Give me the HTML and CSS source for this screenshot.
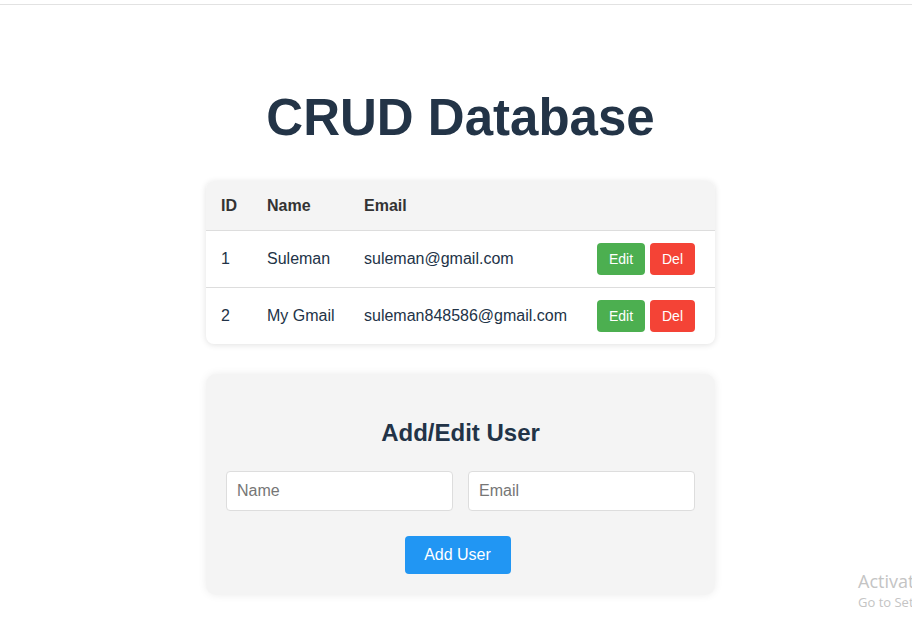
FILE: index.html
```html
<!DOCTYPE html>
<html lang="en">
<head>
<meta charset="utf-8">
<title>CRUD Database</title>
<link rel="stylesheet" href="styles.css">
</head>
<body>
<div class="topline"></div>
<main class="page">
  <h1 class="title">CRUD Database</h1>
  <div class="card table-card">
    <table class="users">
      <thead>
        <tr><th class="c-id">ID</th><th class="c-name">Name</th><th class="c-email">Email</th><th class="c-act"></th></tr>
      </thead>
      <tbody>
        <tr>
          <td>1</td><td>Suleman</td><td>suleman@gmail.com</td>
          <td class="c-act"><div class="actions"><button class="btn edit">Edit</button><button class="btn del">Del</button></div></td>
        </tr>
        <tr>
          <td>2</td><td>My Gmail</td><td>suleman848586@gmail.com</td>
          <td class="c-act"><div class="actions"><button class="btn edit">Edit</button><button class="btn del">Del</button></div></td>
        </tr>
      </tbody>
    </table>
  </div>
  <form class="card form-card">
    <h2 class="form-title">Add/Edit User</h2>
    <div class="fields">
      <input class="field" type="text" placeholder="Name">
      <input class="field" type="email" placeholder="Email">
    </div>
    <button type="button" class="btn add">Add User</button>
  </form>
</main>
<div class="watermark">
  <div class="wm-big">Activate Windows</div>
  <div class="wm-small">Go to Settings to activate Windows.</div>
</div>
</body>
</html>
```
FILE: styles.css
```css
html, body {
  margin: 0;
  padding: 0;
  background: #ffffff;
  overflow: hidden;
}
body {
  font-family: "Liberation Sans", Arial, sans-serif;
  width: 912px;
  height: 628px;
  position: relative;
}
.topline {
  height: 4px;
  border-bottom: 1px solid #e2e2e2;
}
.page {
  display: flex;
  flex-direction: column;
  align-items: center;
  padding-left: 9px;
}
.title {
  margin: 83px 0 0 0;
  font-size: 51px;
  line-height: 59px;
  font-weight: bold;
  color: #233447;
}
.card {
  width: 509px;
  box-sizing: border-box;
}
.table-card {
  margin-top: 34px;
  border-radius: 8px;
  background: #fff;
  box-shadow: 0 1px 6px rgba(0,0,0,0.12);
  overflow: hidden;
}
.users {
  width: 100%;
  table-layout: fixed;
  border-collapse: collapse;
  font-size: 16px;
  color: #223347;
}
.users th {
  background: #f4f4f4;
  color: #333333;
  font-weight: bold;
  text-align: left;
  height: 49px;
  padding: 1px 0 0 15px;
  box-sizing: border-box;
}
.users td {
  height: 57px;
  padding: 0 0 0 15px;
  border-top: 1px solid #dddddd;
  box-sizing: border-box;
}
.c-id { width: 46px; }
.c-name { width: 97px; }
.c-email { width: 233px; }
.c-act { width: 133px; }
.actions {
  display: flex;
  gap: 5px;
}
.btn {
  border: none;
  border-radius: 4px;
  color: #ffffff;
  font-family: "Liberation Sans", Arial, sans-serif;
  cursor: pointer;
}
.edit, .del {
  height: 32px;
  font-size: 14px;
  padding: 0 12px;
}
.edit { background: #4caf50; width: 48px; }
.del { background: #f44336; width: 45px; }
.form-card {
  margin-top: 30px;
  background: #f4f4f4;
  border-radius: 10px;
  box-shadow: 0 0 8px rgba(0,0,0,0.08);
  padding: 45px 20px 21px;
  display: flex;
  flex-direction: column;
  align-items: center;
}
.form-title {
  margin: 0;
  font-size: 24px;
  line-height: 28px;
  font-weight: bold;
  color: #223347;
}
.fields {
  margin-top: 24px;
  display: flex;
  gap: 15px;
  width: 100%;
}
.field {
  flex: 1;
  min-width: 0;
  height: 40px;
  box-sizing: border-box;
  border: 1px solid #dddddd;
  border-radius: 4px;
  background: #fff;
  padding: 0 10px;
  font-size: 16px;
  font-family: "Liberation Sans", Arial, sans-serif;
  color: #333;
}
.field::placeholder { color: #767676; }
.add {
  margin-top: 25px;
  margin-right: 6px;
  background: #2196f3;
  height: 38px;
  width: 106px;
  font-size: 16px;
  padding: 0;
}
.watermark {
  position: absolute;
  left: 858px;
  top: 569px;
  white-space: nowrap;
  font-family: "Open Sans", "Noto Sans", sans-serif;
  color: #c4c4c4;
}
.wm-big { font-size: 18px; line-height: 24px; }
.wm-small { font-size: 13px; line-height: 18px; }
```
